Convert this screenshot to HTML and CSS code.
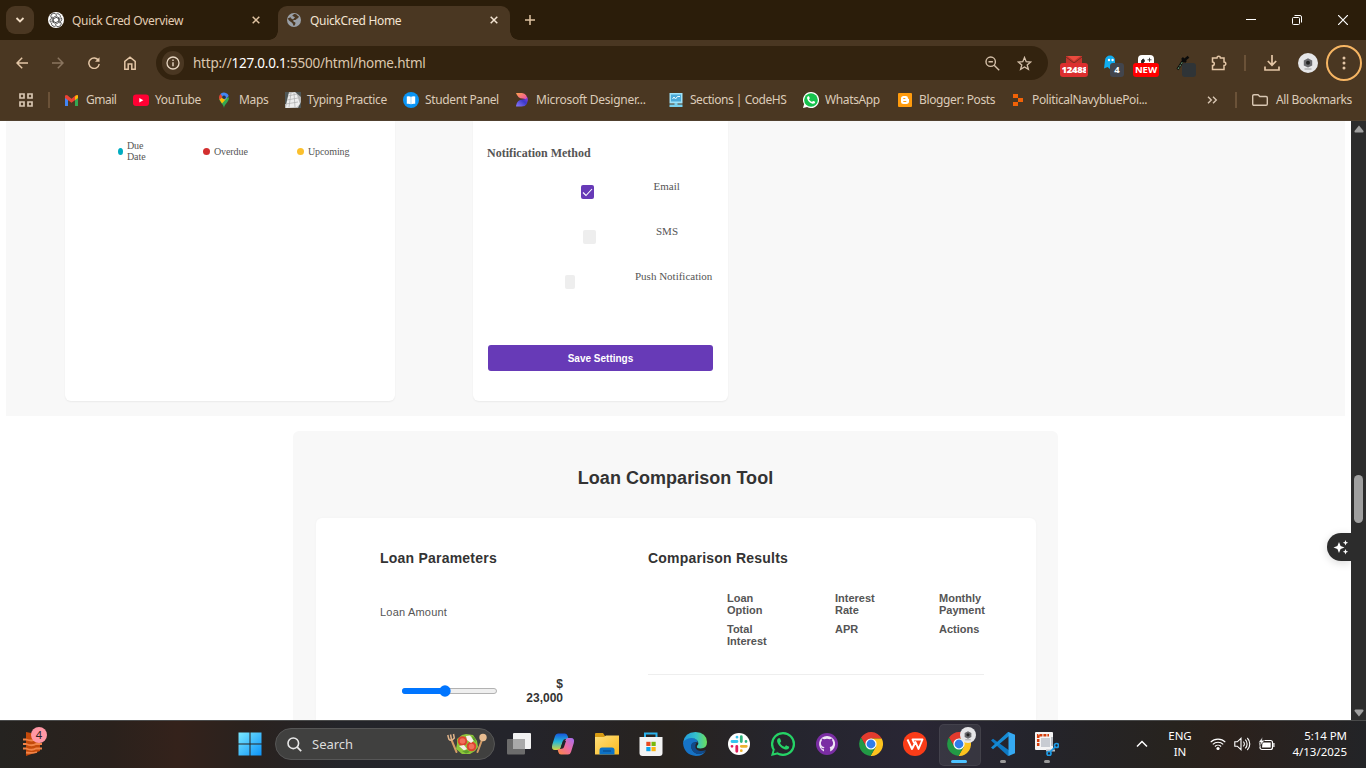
FILE: index.html
```html
<!DOCTYPE html>
<html lang="en">
<head>
<meta charset="utf-8">
<title>QuickCred Home</title>
<link rel="stylesheet" href="styles.css">
</head>
<body>
<svg class="defs" aria-hidden="true">
  <defs>
    <linearGradient id="winG" x1="0" y1="0" x2="1" y2="1"><stop offset="0" stop-color="#7be9ff"/><stop offset="1" stop-color="#0c93f8"/></linearGradient>
    <linearGradient id="folderG" x1="0" y1="0" x2="1" y2="1"><stop offset="0" stop-color="#ffe07c"/><stop offset="1" stop-color="#fbb91d"/></linearGradient>
    <linearGradient id="edgeG" x1="0" y1="0" x2="1" y2="0"><stop offset="0" stop-color="#2099dd"/><stop offset=".55" stop-color="#35c1cb"/><stop offset="1" stop-color="#6ce05a"/></linearGradient>
    <linearGradient id="copA" x1="0" y1="0" x2="0" y2="1"><stop offset="0" stop-color="#1557dc"/><stop offset=".5" stop-color="#24b6d8"/><stop offset="1" stop-color="#d6d43f"/></linearGradient>
    <linearGradient id="copB" x1="1" y1="0" x2="0" y2="1"><stop offset="0" stop-color="#a26df4"/><stop offset=".5" stop-color="#ee6ca0"/><stop offset="1" stop-color="#fb8a3e"/></linearGradient>
    <linearGradient id="desA" x1="0" y1="0" x2="1" y2="1"><stop offset="0" stop-color="#ffa04b"/><stop offset=".6" stop-color="#f4668c"/><stop offset="1" stop-color="#c23ee8"/></linearGradient>
    <linearGradient id="desB" x1="0" y1="1" x2="1" y2="0"><stop offset="0" stop-color="#8d7bff"/><stop offset=".6" stop-color="#3b38c8"/><stop offset="1" stop-color="#8b3df0"/></linearGradient>
    <symbol id="chrome" viewBox="0 0 24 24"><path fill="#e33b2e" d="M12 6.5H22.7A12 12 0 0 0 2 5.6L7.2 14.8 12 12z"/><path fill="#fcc31e" d="M12 6.5H22.7A12 12 0 0 1 11.5 24L16.8 14.8 12 12z"/><path fill="#229a45" d="M2 5.6A12 12 0 0 0 11.5 24L16.8 14.8 12 12 7.2 14.8z"/><circle cx="12" cy="12" r="5.6" fill="#fff"/><circle cx="12" cy="12" r="4.4" fill="#2f7de9"/></symbol>
    <symbol id="avatar" viewBox="0 0 20 20"><circle cx="10" cy="10" r="10" fill="#e6e6e8"/><path d="M10 5.2l4.2 2.4v4.8L10 14.6l-4.2-2.2V7.600z" fill="#6a6a6e"/><circle cx="10" cy="9.800" r="2" fill="#222"/><path d="M6.500 16h7" stroke="#888" stroke-width=".8"/></symbol>
    <symbol id="wa" viewBox="0 0 24 24"><path fill="#25d366" d="M12 0A12 12 0 0 0 1.700 18.100L0 24l6.100-1.600A12 12 0 1 0 12 0z"/></symbol>
    <symbol id="phone" viewBox="0 0 24 24"><path d="M17.500 14.400c-.3-.2-1.800-.9-2-1-.3-.1-.5-.1-.7.2-.2.300-.8 1-.9 1.100-.2.200-.4.200-.7.100-.3-.2-1.300-.5-2.400-1.500-.9-.8-1.500-1.800-1.700-2.100-.1-.3 0-.5.200-.6l.5-.6c.2-.2.200-.3.300-.5v-.5c0-.2-.7-1.700-.9-2.300-.2-.6-.5-.5-.7-.5h-.6c-.2 0-.5 0-.8.400-.3.300-1 1-1 2.500s1.100 2.900 1.200 3.100c.1.200 2.100 3.200 5.100 4.500 2.500 1 3 .8 3.600.7.500 0 1.700-.7 2-1.400.2-.7.200-1.300.2-1.400-.1-.2-.3-.2-.7-.2z"/></symbol>
  </defs>
</svg>

<header class="browser">
  <div class="tabstrip">
    <button class="tab-search"><svg width="10" height="8" viewBox="0 0 10 8"><path d="M1.500 2L5 5.500 8.500 2" fill="none" stroke="#f0dcc4" stroke-width="1.800"/></svg></button>
    <div class="tab">
      <svg width="16" height="16" viewBox="0 0 16 16"><circle cx="8" cy="8" r="8" fill="#fff"/><g fill="none" stroke="#333" stroke-width=".8"><path d="M8 2.300a2.700 2.700 0 0 1 4.300 2.600 2.700 2.700 0 0 1 .1 4.800A2.700 2.700 0 0 1 8 13.700a2.700 2.700 0 0 1-4.400-2.600 2.700 2.700 0 0 1 0-4.900A2.700 2.700 0 0 1 8 2.300z"/><path d="M5.300 10V5.500L9 3.400M10.700 6v4.500L7 12.600M5.300 7L9.200 4.800l3.500 2M10.700 9l-3.900 2.200-3.500-2M8 5.200L11.800 7.500v3.800M8 10.800L4.200 8.500V4.700"/></g></svg>
      <span class="tab-title t-over">Quick Cred Overview</span>
      <svg class="x" width="8" height="8" viewBox="0 0 8 8"><path d="M.7.7l6.600 6.600M7.300.7L.7 7.300" stroke="#e0c3a2" stroke-width="1.500"/></svg>
    </div>
    <div class="tab active">
      <svg width="14" height="14" viewBox="0 0 14 14"><circle cx="7" cy="7" r="7" fill="#9aa0a8"/><path d="M7 1c3-.5 3 2 5 2.500l-1 1.800c-2 .2-1 1.700-3.500 1.700-2 0-1.500 1.800.5 2.200 1 .4.300 2.800-1 3.800-1-.3-.5-2-2-3.200C4 8.700 2 8 .8 5.400L4 4z" fill="#4a3722"/><path d="M4.500 2.500L8 4.200 6 6.400 3.500 5z" fill="#9aa0a8"/></svg>
      <span class="tab-title t-home">QuickCred Home</span>
      <svg class="x" width="8" height="8" viewBox="0 0 8 8"><path d="M.7.7l6.600 6.600M7.300.7L.7 7.300" stroke="#f4e4d2" stroke-width="1.500"/></svg>
    </div>
    <svg class="plus" width="10" height="10" viewBox="0 0 10 10"><path d="M5 0v10M0 5h10" stroke="#e0c3a2" stroke-width="1.500"/></svg>
    <div class="winctl">
      <svg width="10" height="10" viewBox="0 0 10 10"><path d="M0 4.500h10" stroke="#fff"/></svg>
      <svg width="10" height="10" viewBox="0 0 10 10"><g fill="none" stroke="#fff"><rect x=".5" y="2.500" width="7" height="7" rx="1"/><path d="M2.500.5H8q1.500 0 1.500 1.500v5.500"/></g></svg>
      <svg width="10" height="10" viewBox="0 0 10 10"><path d="M0 0l10 10M10 0L0 10" stroke="#fff" stroke-width="1.200"/></svg>
    </div>
  </div>

  <div class="toolbar">
    <div class="nav">
      <svg width="12" height="12" viewBox="0 0 12 12"><path d="M12 6H1.200M6.200.8L1 6l5.200 5.200" fill="none" stroke="#e4c6a6" stroke-width="1.500"/></svg>
      <svg width="12" height="12" viewBox="0 0 12 12"><path d="M0 6h10.800M5.800.8L11 6l-5.200 5.200" fill="none" stroke="#8a755f" stroke-width="1.500"/></svg>
      <svg width="12" height="12" viewBox="0 0 12 12"><path d="M10.500 3.500A5.200 5.200 0 1 0 11.200 7" fill="none" stroke="#e4c6a6" stroke-width="1.500"/><path d="M11.500.3v4.500H7z" fill="#e4c6a6"/></svg>
      <svg width="12" height="14" viewBox="0 0 12 14"><path d="M.8 13.200V5.300L6 1.200l5.200 4.100v7.900H7.800V8H4.200v5.200z" fill="none" stroke="#e4c6a6" stroke-width="1.500"/></svg>
    </div>
    <div class="omnibox">
      <span class="info"><svg width="14" height="14" viewBox="0 0 14 14"><circle cx="7" cy="7" r="6" fill="none" stroke="#e8d7c3" stroke-width="1.300"/><path d="M7 6.200v4M7 3.500v1.400" stroke="#e8d7c3" stroke-width="1.400"/></svg></span>
      <span class="url">http://<b>127.0.0.1</b>:5500/html/home.html</span>
      <svg class="mag" width="15" height="15" viewBox="0 0 15 15"><g fill="none" stroke="#d5c0a9" stroke-width="1.400"><circle cx="5.700" cy="5.700" r="4.700"/><path d="M9.200 9.200l5 5M3.500 5.700h4.400"/></g></svg>
      <svg width="15" height="15" viewBox="0 0 15 15"><path d="M7.500 1.500l1.700 4.200 4.500.3-3.500 2.900 1.200 4.400-3.900-2.400-3.900 2.400 1.200-4.400L1.300 6l4.500-.3z" fill="none" stroke="#d5c0a9" stroke-width="1.300"/></svg>
    </div>
    <div class="exts">
      <span class="ext mail"><svg width="16" height="10" viewBox="0 0 16 10"><path fill="#c5352c" d="M0 1h16v9H0z"/><path fill="#ea4b3e" d="M1.500 1h13L8 6z"/><path d="M0 2l8 6 8-6" fill="none" stroke="#7a2a20" stroke-width="1"/></svg><i class="tag red"><b>12488</b></i></span>
      <span class="ext ghost"><svg width="12" height="14" viewBox="0 0 12 14"><path fill="#11adf0" d="M1 5.500a5 5 0 0 1 10 0V14L8.500 12 6 14l-2.500-2L0 13.500z"/><circle cx="5" cy="5" r="1.200" fill="#fff"/><circle cx="8.600" cy="5" r="1.200" fill="#fff"/></svg><i class="tag slate">4</i></span>
      <span class="ext panda"><svg width="16" height="10" viewBox="0 0 16 10"><rect width="16" height="14" rx="4" fill="#fff"/><path d="M3.500 5.500q2.500-3 3 .5 0 1.500-3 2.500zM11.500 2.800v4M9.500 4.800h4" fill="#222" stroke="#222" stroke-width=".8"/></svg><i class="tag bright">NEW</i></span>
      <span class="ext drop"><svg width="14" height="16" viewBox="0 0 14 16"><path d="M1.500 14.500L7.500 5" stroke="#0b0b0b" stroke-width="2.400"/><path d="M2 14L6.500 7" stroke="#5d8a66" stroke-width="1.200" stroke-dasharray="2 1"/><path d="M6 3l4 4M8.500 5L12.500 1.800" stroke="#0b0b0b" stroke-width="2.600"/></svg><i class="tag dark"></i></span>
      <svg class="puzzle" width="17" height="16" viewBox="0 0 17 16"><path d="M1.500 3H6a1.700 1.700 0 0 1 3.400 0H13v4a1.800 1.800 0 0 1 0 3.600v4H1.500v-4a1.800 1.800 0 0 0 0-3.600z" fill="none" stroke="#e4c6a6" stroke-width="1.500"/></svg>
      <span class="sep"></span>
      <svg class="dl" width="16" height="16" viewBox="0 0 16 16"><path d="M8 0v10M3.800 6L8 10.200 12.200 6M1 11.500V15h14v-3.500" fill="none" stroke="#e4c6a6" stroke-width="1.700"/></svg>
      <svg class="me" width="20" height="20"><use href="#avatar"/></svg>
      <span class="menu"><svg width="4" height="14" viewBox="0 0 4 14"><g fill="#e4c6a6"><circle cx="2" cy="2" r="1.500"/><circle cx="2" cy="7" r="1.500"/><circle cx="2" cy="12" r="1.500"/></g></svg></span>
    </div>
  </div>

  <nav class="bookmarks">
    <svg class="apps" width="14" height="14" viewBox="0 0 14 14"><g fill="none" stroke="#d8c6b2" stroke-width="1.700"><path d="M1 1h4v4H1zM9 1h4v4H9zM1 9h4v4H1zM9 9h4v4H9z"/></g></svg>
    <span class="sep"></span>
    <a class="bm b1"><svg width="16" height="16" viewBox="0 0 16 16"><path fill="#4285f4" d="M1 5l3 2v7H1z"/><path fill="#34a853" d="M14 5l-3 2v7h3z"/><path fill="#ea4335" d="M1 3.500L3 3l4.500 3.800L12 3l2 .5V6L7.500 10.800 1 6z"/><path fill="#fbbc04" d="M11 4.500L13 3l1 .5V6l-3 2z"/></svg><span>Gmail</span></a>
    <a class="bm b2"><svg width="16" height="16" viewBox="0 0 16 16"><rect y="2.500" width="16" height="11.500" rx="3" fill="#ff0033"/><path d="M6.300 6v4.500l4-2.250z" fill="#fff"/></svg><span>YouTube</span></a>
    <a class="bm b3"><svg width="16" height="16" viewBox="0 0 16 16"><path fill="#34a853" d="M7 16C6.500 12 2 10 2 5.500h10C12 10 7.500 12 7 16z"/><path fill="#fbbc04" d="M2.500 7.500L6 4l4 2-5 5.500z"/><path fill="#ea4335" d="M2 5.500q0-2 1.400-3.500L6 4 2.500 8z"/><path fill="#4285f4" d="M3.400 2A5 5 0 0 1 11.700 4L8 8 5.500 4.500z"/><circle cx="7" cy="5.300" r="1.800" fill="#22364a"/></svg><span>Maps</span></a>
    <a class="bm b4"><svg width="16" height="16" viewBox="0 0 16 16"><path fill="#b8b8b8" d="M0 0h16v16H0z"/><path fill="#eee" d="M3 2l8-2 4 12-3 3-11 1z"/><path fill="#4f5655" d="M10 0h6v5zM0 0h4L1 12H0zM13 16l3-6v6z"/><path d="M3 4l9-2M2 8l11-2M1 12l12-2M6 1L4 15M9 1l1 14" stroke="#aaa" stroke-width=".7"/></svg><span>Typing Practice</span></a>
    <a class="bm b5"><svg width="16" height="16" viewBox="0 0 16 16"><circle cx="8" cy="8" r="8" fill="#0a94f5"/><path fill="#fff" d="M3.800 4.500q2.500-.8 4 .3v7.500q-1.500-.9-4-.5zM12.200 4.500q-2.500-.8-4 .3v7.500q1.500-.9 4-.5z"/></svg><span>Student Panel</span></a>
    <a class="bm b6"><svg width="16" height="16" viewBox="0 0 16 16"><path fill="url(#desA)" d="M2 1h6q5.500.5 5.500 8-1-2.500-5-2.500Q4 6.500 2 1z"/><path fill="url(#desB)" d="M2 14q1-6.500 6.500-6.500Q13 7 13.500 5q1.500 9.500-6 9.500H3Q2 14.500 2 14z"/></svg><span>Microsoft Designer...</span></a>
    <a class="bm b7"><svg width="16" height="16" viewBox="0 0 16 16"><rect x="1.500" y="1" width="13" height="10.500" fill="#9fe2f8"/><rect x="3" y="2.500" width="10" height="7" fill="#4aa9d8"/><path d="M4.500 7l1.500-2L7.500 7l2-2.500h2.500" stroke="#e9fbff" fill="none"/><path fill="#79d2f0" d="M6.500 11h3v2h-3zM1.500 12.500h13V15h-13z"/></svg><span>Sections | CodeHS</span></a>
    <a class="bm b8"><svg width="16" height="16" viewBox="0 0 24 24"><path fill="#fff" d="M12 0A12 12 0 0 0 1.700 18.100L0 24l6.100-1.600A12 12 0 1 0 12 0z"/><circle cx="12" cy="12" r="10.300" fill="#16c24d"/><use href="#phone" fill="#fff"/></svg><span>WhatsApp</span></a>
    <a class="bm b9"><svg width="16" height="16" viewBox="0 0 16 16"><rect x="1" y="1" width="14" height="14" rx="1" fill="#ff9b0d"/><path d="M6.500 4h2.300Q11 4 11 6.300q0 .8 1 .8v2.200q0 2.700-2.600 2.700H6.500Q4 12 4 9.500v-3Q4 4 6.500 4z" fill="#fff"/><path d="M6.300 6.500h2M6.300 9.500h3" stroke="#ff9b0d" stroke-width="1.100"/></svg><span>Blogger: Posts</span></a>
    <a class="bm b10"><svg width="16" height="16" viewBox="0 0 16 16"><path fill="#f26207" d="M3 2h5v4H3zM8 6h5v4H8zM3 10h5v4H3z"/></svg><span>PoliticalNavybluePoi...</span></a>
    <svg class="more" width="11" height="8" viewBox="0 0 11 8"><path d="M1 .7L4.300 4 1 7.300M6 .7L9.300 4 6 7.300" fill="none" stroke="#d8c6b2" stroke-width="1.400"/></svg>
    <span class="sep s2"></span>
    <a class="bm b11"><svg width="16" height="12" viewBox="0 0 16 12"><path d="M.7 2q0-1.300 1.300-1.300h4L7.800 2.500H14q1.300 0 1.300 1.300V10q0 1.300-1.300 1.300H2Q.7 11.300.7 10z" fill="none" stroke="#d8c6b2" stroke-width="1.400"/></svg><span>All Bookmarks</span></a>
  </nav>
</header>

<div class="viewport">
  <main class="page">
    <section class="band">
      <div class="card calendar">
        <div class="legend"><i class="dot due"></i><span class="two">Due Date</span></div>
        <div class="legend over"><i class="dot red"></i><span>Overdue</span></div>
        <div class="legend up"><i class="dot amber"></i><span>Upcoming</span></div>
      </div>
      <div class="card notify">
        <h4>Notification Method</h4>
        <div class="opt email"><i class="box on"><svg width="11" height="9" viewBox="0 0 11 9"><path d="M1 4.500L4 7.500 10 1" fill="none" stroke="#fff" stroke-width="1.100"/></svg></i><span>Email</span></div>
        <div class="opt sms"><i class="box"></i><span>SMS</span></div>
        <div class="opt push"><i class="box"></i><span>Push Notification</span></div>
        <button class="save"><span>Save Settings</span></button>
      </div>
    </section>
    <section class="tool">
      <h2><span>Loan Comparison Tool</span></h2>
      <div class="panel">
        <div class="params">
          <h3><span class="h-a">Loan Parameters</span></h3>
          <label>Loan Amount</label>
          <div class="range">
            <svg width="96" height="12" viewBox="0 0 96 12"><rect x=".5" y="3.500" width="94" height="5" rx="2.500" fill="#efefef" stroke="#b2b2b2"/><path d="M3 3h40v6H3a3 3 0 0 1 0-6z" fill="#0075ff"/><circle cx="43" cy="6" r="5.700" fill="#0075ff"/></svg>
            <output>$ 23,000</output>
          </div>
        </div>
        <div class="results">
          <h3><span class="h-b">Comparison Results</span></h3>
          <div class="heads">
            <span>Loan<br>Option</span><span>Interest<br>Rate</span><span>Monthly<br>Payment</span>
            <span>Total<br>Interest</span><span>APR</span><span>Actions</span>
          </div>
        </div>
      </div>
    </section>
  </main>
  <div class="scrollbar">
    <svg width="10" height="8" viewBox="0 0 10 8"><path d="M5 .5L9.500 6q.3 1.500-1 1.500h-7Q.2 7.500.5 6z" fill="#9f9f9f"/></svg>
    <i class="thumb"></i>
    <svg class="down" width="10" height="8" viewBox="0 0 10 8"><path d="M5 7.500L9.500 2q.3-1.500-1-1.500h-7Q.2.500.5 2z" fill="#9f9f9f"/></svg>
  </div>
  <div class="sparkle"><svg width="16" height="16" viewBox="0 0 16 16"><path fill="#fff" d="M6 3l1.600 3.900L11.500 8.500 7.600 10.100 6 14l-1.600-3.900L.5 8.500l3.900-1.600zM12.500 1l.8 1.900 1.900.8-1.900.8-.8 1.900-.8-1.900-1.900-.8 1.900-.8zM12.500 10l.8 1.900 1.900.8-1.900.8-.8 1.900-.8-1.900-1.900-.8 1.900-.8z"/></svg></div>
</div>

<footer class="taskbar">
  <div class="widget"><svg width="22" height="26" viewBox="0 0 22 26"><path fill="#c44a0b" d="M4 1l5 1 9 5v13L4 25z"/><path d="M1 8.500h3q6 2 10 0h6M1 13h3q6 2.500 10 0h6M1 17.500h3q6 2.500 10 0h6M4 21.500q6 1 11-.5" fill="none" stroke="#f08347" stroke-width="1.800"/></svg><i>4</i></div>
  <div class="cell start"><svg width="24" height="24" viewBox="0 0 24 24"><path fill="url(#winG)" d="M.5.5h11v11H.5zM12.500.5h11v11h-11zM.5 12.500h11v11H.5zM12.500 12.500h11v11h-11z"/></svg></div>
  <div class="search">
    <svg width="15" height="15" viewBox="0 0 15 15"><circle cx="6.300" cy="6.300" r="5.300" fill="none" stroke="#e8e8e8" stroke-width="1.600"/><path d="M10.200 10.200l4 4" stroke="#e8e8e8" stroke-width="1.800"/></svg>
    <span>Search</span>
    <svg class="salad" width="40" height="22" viewBox="0 0 40 22"><path d="M4.500 7l5 12M35 7l-4.500 12" stroke="#d39c66" stroke-width="2" stroke-linecap="round"/><path d="M.8 2l1 4q2 3 5.500-1l-.8-4M3.500 1.500l1 5" fill="none" stroke="#e0b48a" stroke-width="1.500"/><circle cx="36" cy="4.500" r="3.700" fill="#e8bd90"/><path fill="#8cc63a" d="M10 6l5-4 4-1 7 1 4 6 1 6-3 4-5 3-8 0-6-5 1-5z"/><circle cx="15.500" cy="8" r="4.800" fill="#dd4330"/><circle cx="15.500" cy="8" r="2.800" fill="#f0705a"/><circle cx="24.500" cy="13.500" r="4.800" fill="#dd4330"/><circle cx="24.500" cy="13.500" r="2.800" fill="#f0705a"/><path fill="#f6efe9" d="M19 3l4-.5 4 5-3 2.500-4-3zM12 13l5-1 3 4-3 1.500z"/><path fill="#5f9d2c" d="M25 3l3 2 1 4-3-2zM15 18l5-1 3 2-4 1.500z"/></svg>
  </div>
  <div class="cell view"><svg width="24" height="24" viewBox="0 0 24 24"><rect x="6" y="1" width="18" height="16" rx="1" fill="#f2f2f2"/><rect y="7" width="18" height="15.500" rx="1" fill="#6c6c6c"/><path d="M6 7h12v10H6z" fill="#a9a9a9"/></svg></div>
  <div class="cell"><svg width="24" height="24" viewBox="0 0 24 24"><path fill="url(#copA)" d="M7 1.500h7q2 0 2.700 2.500L17.500 7h-3q-2 0-2.700 2.200L9.500 16q-.7 2-2.500 2H4Q0 18 1.200 13L4 4q.8-2.500 3-2.500z"/><path fill="url(#copB)" d="M17 22.500h-7q-2 0-2.700-2.500L6.500 17h3q2 0 2.700-2.200L14.500 8q.7-2 2.500-2h3q4 0 2.800 5L20 20q-.8 2.500-3 2.500z"/><path d="M10 15l2-6h3l-2 6q-.5 1.500-2 1.500z" fill="#232229"/></svg></div>
  <div class="cell"><svg width="24" height="24" viewBox="0 0 24 24"><path fill="#d89b12" d="M0 2q0-1 1-1h7l2 3v4H0z"/><path fill="url(#folderG)" d="M0 5h9l2-1.500h13V22q0 .5-.5.500H.5Q0 22.500 0 22z"/><path fill="#0d72c5" d="M4.500 22.500V18q0-2.500 2.500-2.500h10q2.500 0 2.500 2.500v4.500z"/><path d="M8 19h8" stroke="#0a5498" stroke-width="1.500"/></svg></div>
  <div class="cell"><svg width="24" height="24" viewBox="0 0 24 24"><path d="M6 7V1.500h11.500V7" fill="none" stroke="#2ab2ec" stroke-width="2"/><path fill="#f3f3f3" d="M.5 5h23v16q0 3-3 3h-17q-3 0-3-3z"/><path fill="#e8491f" d="M7.300 9.800h4.200V14H7.300z"/><path fill="#79b80a" d="M12.500 9.800h4.200V14h-4.200z"/><path fill="#0ba2ea" d="M7.300 15h4.200v4.200H7.300z"/><path fill="#fcb510" d="M12.500 15h4.200v4.200h-4.200z"/></svg></div>
  <div class="cell"><svg width="24" height="24" viewBox="0 0 24 24"><path fill="#1673c6" d="M0 11Q1 5 8 5.500q6 .5 7 5-5-1-6.500 2.500-1 6 5 8.500 6 1 9.500-3-3 5.500-10 5.500Q1 23 0 11z"/><path fill="url(#edgeG)" d="M.2 10.500Q1.500 0 12.500 0 23.500.5 24 10q0 6.500-6.500 6.500-4.500 0-3.500-2.500 2.200-2 1-4.500Q12.500 5.500 8 6 2 6.500.2 10.500z"/><path fill="#114a8b" d="M8.500 12q-1.500 6 4.500 9.500 6 2 10-3.500-8 2.500-10.500-2-1-3 1-5-3.500-2-5 1z"/></svg></div>
  <div class="cell"><svg width="24" height="24" viewBox="0 0 24 24"><circle cx="12" cy="12" r="11" fill="#fff"/><g stroke-width="2.800" stroke-linecap="round"><path d="M5 9.500h5M10 5.200v0" stroke="#36c5f0"/><path d="M14.300 4.700v4.800M19 9.500v0" stroke="#2eb67d"/><path d="M14.300 14.300h5M14.300 18.700v0" stroke="#ecb22e"/><path d="M9.800 14.300v5M5 14.300v0" stroke="#e01e5a"/></g></svg></div>
  <div class="cell"><svg width="24" height="24" viewBox="0 0 24 24"><use href="#wa"/><circle cx="12" cy="12" r="9.800" fill="#25252b"/><path d="M2.800 21.200l1-4 3 3z" fill="#25252b"/><use href="#phone" fill="#25d366"/></svg></div>
  <div class="cell"><svg width="24" height="24" viewBox="0 0 24 24"><circle cx="12" cy="12" r="11" fill="#7a2da3"/><path fill="#eee5f4" d="M12 4a8 8 0 0 0-3 15.400v-2.200c-2 .4-2.600-1-3-1.700 1.200-.2 1.300 1.200 3 .7l.4-1.200c-2-.3-3.500-1.300-3.500-4 0-1 .4-1.700.9-2.300V6.400l2.400.9a8 8 0 0 1 5.600 0l2.400-.9v2.300c.5.600.9 1.300.9 2.300 0 2.700-1.500 3.700-3.500 4 .4.500.6 1 .6 2v2.400A8 8 0 0 0 12 4z"/></svg></div>
  <div class="cell"><svg width="24" height="24"><use href="#chrome"/></svg></div>
  <div class="cell"><svg width="24" height="24" viewBox="0 0 24 24"><circle cx="12" cy="12" r="12" fill="#fa3c18"/><path d="M4.500 7.500L9 17l3.500-7 3 7 4-9.500h-10l1.500 3.500" fill="none" stroke="#fff" stroke-width="1.900" stroke-linejoin="round"/></svg></div>
  <div class="cell current"><svg width="24" height="24"><use href="#chrome"/></svg><svg class="mini" width="16" height="16"><use href="#avatar"/></svg></div>
  <div class="cell run"><svg width="24" height="24" viewBox="0 0 24 24"><path fill="#0e79c4" d="M0 8.500L2 6.700 19 19v4L17 24z"/><path fill="#168bd4" d="M0 15.500l2 1.800L18 4V0h-1z"/><path fill="#35a9f2" d="M17.500 0L24 2.800v18.400L17.500 24z"/></svg></div>
  <div class="cell run"><svg width="24" height="24" viewBox="0 0 24 24"><rect width="18" height="18" rx="1" fill="#f4f4f4"/><path d="M3.200 14V3.200H14" fill="none" stroke="#d43d0a" stroke-width="2.500" stroke-dasharray="3 1"/><path d="M6 6h9v9H6z" fill="#c8ccd2"/><path d="M17 5v9M11 18.500h9" stroke="#b9bec4" stroke-width="2"/><g fill="none" stroke="#1d9be6" stroke-width="1.700"><circle cx="21.500" cy="13.500" r="2"/><circle cx="14" cy="21.500" r="2"/><path d="M15 20l5-5"/></g></svg></div>
  <div class="tray">
    <svg class="chev" width="12" height="8" viewBox="0 0 12 8"><path d="M1 6.500L6 1.500l5 5" fill="none" stroke="#fff" stroke-width="1.500"/></svg>
    <div class="lang">ENG<br>IN</div>
    <svg class="wifi" width="16" height="14" viewBox="0 0 16 14"><g fill="none" stroke="#fff" stroke-width="1.100"><path d="M.7 5.200a10.300 10.300 0 0 1 14.600 0M2.800 7.400a7.300 7.300 0 0 1 10.400 0M4.900 9.500a4.400 4.400 0 0 1 6.200 0"/></g><circle cx="8" cy="11.500" r="1.600" fill="#fff"/></svg>
    <svg class="vol" width="17" height="14" viewBox="0 0 17 14"><g fill="none" stroke="#fff" stroke-width="1.100"><path d="M.8 4.800h2.500L7 1.300v11.400L3.300 9.200H.8zM9.300 4.700a3 3 0 0 1 0 4.600M11.300 2.700a6 6 0 0 1 0 8.600M13.300 1a8.500 8.500 0 0 1 0 12"/></g></svg>
    <svg class="bat" width="17" height="14" viewBox="0 0 17 14"><rect x="2" y="3.500" width="12.500" height="9" rx="2" fill="none" stroke="#fff" stroke-width="1.200"/><path d="M4.500 5.500h8.200v5H4zM15.300 6h1.200v4h-1.200z" fill="#fff"/><path d="M4.500 0L.5 5.500H3L1.500 9.500l5-6H4z" fill="#fff" stroke="#292320" stroke-width=".5"/></svg>
    <div class="clock"><span class="time">5:14 PM</span><br><span class="date">4/13/2025</span></div>
  </div>
</footer>
</body>
</html>
```
FILE: styles.css
```css
* { box-sizing: border-box; }
body { margin: 0; width: 1366px; height: 768px; overflow: hidden; display: flex; flex-direction: column; background: #fff; font-family: "Noto Sans", sans-serif; }
svg { display: block; flex: none; }
button { border: 0; padding: 0; }
i { font-style: normal; }
.defs { position: absolute; width: 0; height: 0; }

/* browser frame */
.browser { height: 121px; flex: none; background: #4a3722; color: #e3cdb4; font-size: 12px; border-bottom: 1px solid #50402e; }
.tabstrip { height: 40px; background: #2b1d0a; display: flex; align-items: center; }
.tab-search { width: 28px; height: 28px; margin-left: 6px; border-radius: 9px; background: #4a3722; display: grid; place-items: center; }
.tab { display: flex; align-items: center; width: 244px; height: 34px; margin: 6px 0 0; padding: 0 18px 6px 14px; }
.tab .tab-title { margin-left: 8px; white-space: nowrap; letter-spacing: -.32px; }
.tab .x { margin-left: auto; }
.tab.active { width: 232px; padding: 0 12px 6px 9px; background: #4a3722; border-radius: 9px 9px 0 0; color: #f4e4d2; position: relative; }
.tab .t-home { margin-left: 9px; }
.tab.active::before, .tab.active::after { content: ""; position: absolute; bottom: 0; width: 9px; height: 9px; }
.tab.active::before { left: -9px; background: radial-gradient(circle at 0 0, transparent 8.500px, #4a3722 9px); }
.tab.active::after { right: -9px; background: radial-gradient(circle at 100% 0, transparent 8.500px, #4a3722 9px); }
.plus { margin-left: 15px; }
.winctl { margin-left: auto; display: flex; gap: 36px; margin-right: 18px; }

.toolbar { height: 46px; display: flex; align-items: center; }
.nav { width: 156px; display: flex; gap: 24px; padding-left: 16px; align-items: center; }
.omnibox { width: 892px; height: 34px; border-radius: 17px; background: #33230f; display: flex; align-items: center; padding: 0 16px 0 6px; }
.info { width: 22px; height: 24px; border-radius: 11px; background: #4a3722; display: grid; place-items: center; }
.url { margin-left: 9px; font-size: 13.500px; color: #dcc7ae; letter-spacing: -.23px; }
.url b { font-weight: 400; color: #fff; }
.mag { margin-left: auto; margin-right: 17px; }
.exts { flex: 1; display: flex; align-items: center; }
.ext { position: relative; height: 22px; width: 28px; top: 3px; }
.ext svg { margin: 0 auto; }
.mail { margin-left: 12px; }
.ghost { width: 20px; margin-left: 16px; }
.ghost svg { margin-left: 0; }
.panda { width: 26px; margin-left: 9px; }
.drop { width: 20px; margin-left: 17px; }
.drop svg { margin-left: 0; }
.tag { position: absolute; right: 0; bottom: 0; height: 14px; border-radius: 3px; font-size: 9.500px; font-weight: 700; line-height: 14px; text-align: center; color: #fff; overflow: hidden; }
.tag.red { width: 28px; background: #dc2f2f; font-size: 9.500px; text-align: left; padding-left: 1.500px; }
.tag.red b { display: block; width: 24px; overflow: hidden; letter-spacing: -.3px; }
.tag.slate { width: 14px; background: #42454d; }
.tag.bright { width: 26px; background: #f00; }
.tag.dark { width: 14px; background: #2f3437; }
.puzzle { margin-left: 15px; }
.sep { width: 2px; height: 16px; background: #6b5238; }
.exts .sep { margin-left: 16px; }
.dl { margin-left: 18px; }
.me { margin-left: 18px; }
.menu { width: 36px; height: 36px; border: 2px solid #f6b563; border-radius: 50%; margin-left: 8px; display: grid; place-items: center; }

.bookmarks { height: 28px; display: flex; align-items: center; color: #dccbb8; }
.apps { margin-left: 19px; margin-right: 12px; }
.bookmarks > .sep { margin: 0 14px 0 3px; }
.bm { display: flex; align-items: center; gap: 6px; white-space: nowrap; letter-spacing: -.37px; }
.bm span { position: relative; top: -.5px; }
.b1 { width: 69px; } .b2 { width: 84px; } .b3 { width: 68px; } .b4 { width: 118px; } .b5 { width: 111px; }
.b6 { width: 154px; } .b7 { width: 135px; } .b8 { width: 94px; } .b9 { width: 113px; } .b10 { width: 197px; }
.b6 { letter-spacing: -.25px; } .b7 { letter-spacing: -.47px; } .b1 { letter-spacing: -.5px; }
.bookmarks > .s2 { margin: 0 15px 0 17px; }
.b11 { gap: 8px; }

/* web page */
.viewport { position: relative; height: 599px; display: flex; overflow: hidden; }
.page { width: 1351px; }
.band { height: 295px; margin: 0 6px; background: #f8f8f8; padding-left: 59px; display: flex; gap: 78px; }
.card { height: 280px; background: #fff; border-radius: 0 0 6px 6px; box-shadow: 0 1px 2px rgba(0,0,0,.06); font-family: "Liberation Serif", serif; color: #555; }
.calendar { width: 330px; display: flex; align-items: flex-start; padding: 19px 0 0 53px; font-size: 10px; line-height: 11px; letter-spacing: -.1px; }
.legend { display: flex; align-items: center; height: 22px; width: 85px; gap: 4px; }
.legend.over { width: 94px; }
.two { width: 22px; }
.dot { width: 7px; height: 7px; border-radius: 50%; }
.dot.due { width: 5px; background: #00acc1; }
.dot.red { background: #d32f2f; }
.dot.amber { background: #fbc02d; }
.notify { width: 255px; padding: 24px 15px 0; font-size: 11px; }
.notify h4 { margin: 0 0 16px -1px; font-size: 12px; line-height: 16px; }
.opt { display: grid; height: 45px; line-height: 18px; align-items: start; white-space: nowrap; }
.email { grid-template-columns: 93px 72.500px 1fr; }
.sms { grid-template-columns: 95px 73px 1fr; }
.push { grid-template-columns: 77px 70px 1fr; }
.opt .box { grid-column: 2; margin-top: 8px; width: 13px; height: 14px; border-radius: 2px; background: #eee; display: grid; place-items: center; }
.push .box { width: 10px; }
.opt .on { background: #673ab7; }
.save { display: block; margin-top: 33px; width: 225px; height: 26px; border-radius: 3px; background: #673ab7; color: #fff; font: 700 10px "Liberation Sans", sans-serif; }
.tool { width: 765px; height: 289px; margin: 15px 0 0 293px; padding: 36px 23px 0; background: #f8f8f8; border-radius: 6px 6px 0 0; font-family: "Liberation Sans", sans-serif; color: #555; }
.tool h2 { margin: 0; text-align: center; font-size: 18px; line-height: 22px; color: #333; letter-spacing: .04px; }
.panel { width: 720px; height: 202px; margin-top: 29px; background: #fff; border-radius: 6px 6px 0 0; box-shadow: 0 0 3px rgba(0,0,0,.03); display: flex; padding: 31px 0 0 64px; }
.params { width: 268px; }
.panel h3 { margin: 0; font-size: 14px; line-height: 18px; color: #333; letter-spacing: .22px; }
.params label { display: block; margin-top: 38px; font-size: 11px; line-height: 14px; letter-spacing: .2px; }
.range { display: flex; align-items: center; margin-top: 58px; padding-left: 22px; }
.range output { width: 65px; padding-left: 28px; text-align: right; font-size: 12px; line-height: 14px; font-weight: 700; color: #333; }
.results { width: 336px; }
.heads { height: 108px; padding: 25px 0 0 79px; border-bottom: 1px solid #eee; display: grid; grid-template-columns: 108px 104px 50px; row-gap: 7px; align-content: start; font-size: 11px; font-weight: 700; line-height: 12px; }
.scrollbar { width: 15px; background: #2c2c2c; display: flex; flex-direction: column; align-items: center; padding: 4px 0 3px; }
.thumb { width: 9px; height: 48px; border-radius: 5px; background: #9f9f9f; margin-top: 342px; }
.down { margin-top: auto; }
.sparkle { position: absolute; right: 15px; top: 412px; width: 24px; height: 28px; border-radius: 14px 0 0 14px; background: #2c2c2c; box-shadow: 0 2px 8px rgba(0,0,0,.15); padding: 6px 0 0 6px; clip-path: inset(-15px 0 -15px -15px); }

/* taskbar */
.taskbar { height: 48px; flex: none; display: flex; align-items: center; color: #fff; padding-bottom: 1px; border-top: 1px solid #4a4b4b; background: linear-gradient(90deg, #252320 0, #2a211c 8%, #34221b 13%, #2a221e 18%, #24252a 25%, #24242b 38%, #28231f 49%, #25252e 58%, #292634 67%, #24242b 76%, #27231e 86%, #2b211c 90%, #232427 100%); }
.widget { position: relative; width: 228px; padding-left: 22px; }
.widget i { position: absolute; left: 31px; top: -4px; width: 16px; height: 16px; border-radius: 50%; background: #ff97a5; color: #222; font-size: 11px; line-height: 16px; text-align: center; }
.cell { position: relative; width: 44px; height: 46px; display: grid; place-items: center; flex: none; }
.search { width: 220px; height: 32px; margin: 0 2px 0 3px; border-radius: 16px; background: #40403f; border: 1px solid #565656; display: flex; align-items: center; padding: 0 7px 0 11px; font-size: 13px; color: #ddd; }
.search span { margin-left: 10px; }
.salad { margin-left: auto; }
.current::before { content: ""; position: absolute; left: 2px; top: 3px; width: 40px; height: 40px; border-radius: 5px; background: rgba(255,255,255,.08); border: 1px solid rgba(255,255,255,.06); }
.current::after { content: ""; position: absolute; left: 14px; bottom: 4px; width: 16px; height: 3px; border-radius: 2px; background: #4cc2ff; }
.current > svg:first-child { position: relative; }
.cell .mini { position: absolute; left: 23px; top: 6px; }
.run::after { content: ""; position: absolute; left: 19px; bottom: 4px; width: 6px; height: 3px; border-radius: 2px; background: #9a9a9a; }
.tray { margin-left: auto; display: flex; align-items: center; font-size: 12px; line-height: 16px; }
.lang { width: 30px; margin-left: 17px; text-align: center; font-size: 11.500px; }
.wifi { margin-left: 15px; }
.vol { margin-left: 8px; }
.bat { margin-left: 7px; }
.clock { width: 72px; margin-right: 19px; text-align: right; white-space: nowrap; font-size: 11.500px; }
.clock .time { letter-spacing: -.05px; }
```
